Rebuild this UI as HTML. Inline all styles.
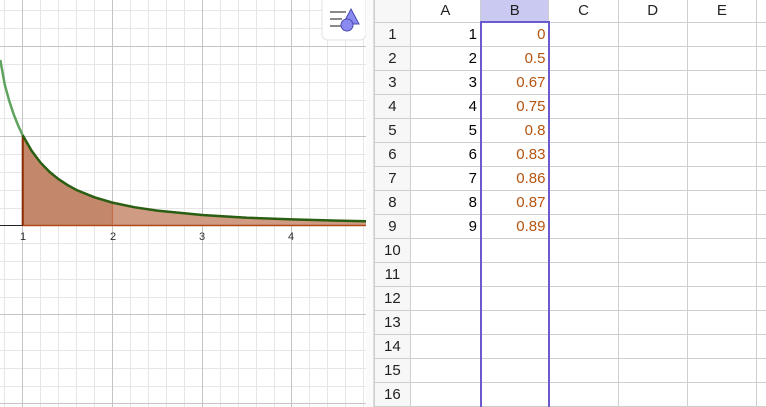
<!DOCTYPE html>
<html><head><meta charset="utf-8"><style>
html,body{margin:0;width:766px;height:407px;overflow:hidden}
body{background:#fff;font-family:"Liberation Sans",Arial,sans-serif;position:relative}
#g{position:absolute;left:0;top:0}
#ss{position:absolute;left:373px;top:0;width:393px;height:407px;overflow:hidden;border-left:1px solid #ddd;background:#fff}
table{border-collapse:collapse;position:absolute;left:0;top:0;font-size:15px;table-layout:fixed}
td{border:1px solid #cfcfcf;height:24px;padding:0 3px;text-align:right;box-sizing:border-box}
td.h{background:#f7f7f7;text-align:center;color:#222}
tr.hd td{background:#fff;text-align:center;height:22px;border-top:none;color:#222}
tr.hd td.b{background:#c9c9f2}
td.v{color:#b5530f}
</style></head><body>
<svg id="g" width="374" height="407" xmlns="http://www.w3.org/2000/svg">
<rect width="374" height="407" fill="#fff"/>
<g stroke="#e6e6e6" stroke-width="1">
<path d="M4.5 0V407M40.5 0V407M58.5 0V407M76.5 0V407M94.5 0V407M130.5 0V407M148.5 0V407M166.5 0V407M184.5 0V407M220.5 0V407M238.5 0V407M256.5 0V407M274.5 0V407M309.5 0V407M327.5 0V407M345.5 0V407M363.5 0V407"/>
<path d="M0 10.5H366M0 28.5H366M0 64.5H366M0 82.5H366M0 100.5H366M0 118.5H366M0 154.5H366M0 172.5H366M0 190.5H366M0 208.5H366M0 243.5H366M0 261.5H366M0 279.5H366M0 297.5H366M0 332.5H366M0 350.5H366M0 368.5H366M0 386.5H366"/>
</g>
<g stroke="#c4c4c4" stroke-width="1">
<path d="M22.5 0V407M112.5 0V407M202.5 0V407M291.5 0V407M0 46.5H366M0 136.5H366M0 314.5H366M0 403.5H366"/>
</g>
<path d="M112.4 225V202.6L134.8 207.3L157.3 210.6L202.1 215L247 217.7L291.8 219.4L336.7 220.6L366 221.2V225Z" fill="#cf9b82"/>
<path d="M22.7 225V135.3L31.7 150.9L40.6 162.7L49.6 171.9L58.6 179.2L67.6 185.1L76.5 190L94.5 197.3L112.4 202.6V225Z" fill="#c3876b"/>
<line x1="0" y1="225.5" x2="366" y2="225.5" stroke="#222" stroke-width="1"/>
<line x1="22.7" y1="225.5" x2="366" y2="225.5" stroke="#b04a1a" stroke-width="1.5"/>
<line x1="22.7" y1="135" x2="22.7" y2="225" stroke="#8b2a00" stroke-width="2"/>
<line x1="112.4" y1="202.6" x2="112.4" y2="225" stroke="#c06a40" stroke-width="1"/>
<polyline points="0.3,60 4.8,84.8 9.2,100.8 13.7,114.3 18.2,125.6 22.7,135.3" fill="none" stroke="#5fa35f" stroke-width="2.5"/>
<polyline points="22.7,135.3 31.7,150.9 40.6,162.7 49.6,171.9 58.6,179.2 67.6,185.1 76.5,190 94.5,197.3 112.4,202.6 134.8,207.3 157.3,210.6 202.1,215 247,217.7 291.8,219.4 336.7,220.6 366,221.2" fill="none" stroke="#2a5e12" stroke-width="2.5"/>
<g font-family="Liberation Sans,Arial,sans-serif" font-size="11" fill="#333" text-anchor="middle">
<text x="23" y="240">1</text><text x="113" y="240">2</text><text x="202" y="240">3</text><text x="291" y="240">4</text>
</g>
<rect x="322" y="-4" width="44" height="44" rx="6" fill="#fff" stroke="#e2e2e2"/>
<g stroke="#8a8a8a" stroke-width="2"><path d="M330 12H346M330 19H342M330 26H342"/></g>
<polygon points="351,9 359,24 343,24" fill="#8b8bef" stroke="#4a4ab0" stroke-width="1"/>
<circle cx="347" cy="25" r="6" fill="#8b8bef" stroke="#4a4ab0" stroke-width="1"/>
<rect x="366" y="0" width="8" height="407" fill="#fbfbfb"/>
</svg>
<div id="ss">
<table>
<colgroup><col style="width:36px"><col style="width:71px"><col style="width:69px"><col style="width:70px"><col style="width:70px"><col style="width:70px"><col style="width:10px"></colgroup>
<tr class="hd"><td class="h" style="background:#f7f7f7"></td><td>A</td><td class="b">B</td><td>C</td><td>D</td><td>E</td><td></td></tr>
<tr><td class="h">1</td><td>1</td><td class="v">0</td><td></td><td></td><td></td><td></td></tr>
<tr><td class="h">2</td><td>2</td><td class="v">0.5</td><td></td><td></td><td></td><td></td></tr>
<tr><td class="h">3</td><td>3</td><td class="v">0.67</td><td></td><td></td><td></td><td></td></tr>
<tr><td class="h">4</td><td>4</td><td class="v">0.75</td><td></td><td></td><td></td><td></td></tr>
<tr><td class="h">5</td><td>5</td><td class="v">0.8</td><td></td><td></td><td></td><td></td></tr>
<tr><td class="h">6</td><td>6</td><td class="v">0.83</td><td></td><td></td><td></td><td></td></tr>
<tr><td class="h">7</td><td>7</td><td class="v">0.86</td><td></td><td></td><td></td><td></td></tr>
<tr><td class="h">8</td><td>8</td><td class="v">0.87</td><td></td><td></td><td></td><td></td></tr>
<tr><td class="h">9</td><td>9</td><td class="v">0.89</td><td></td><td></td><td></td><td></td></tr>
<tr><td class="h">10</td><td></td><td></td><td></td><td></td><td></td><td></td></tr>
<tr><td class="h">11</td><td></td><td></td><td></td><td></td><td></td><td></td></tr>
<tr><td class="h">12</td><td></td><td></td><td></td><td></td><td></td><td></td></tr>
<tr><td class="h">13</td><td></td><td></td><td></td><td></td><td></td><td></td></tr>
<tr><td class="h">14</td><td></td><td></td><td></td><td></td><td></td><td></td></tr>
<tr><td class="h">15</td><td></td><td></td><td></td><td></td><td></td><td></td></tr>
<tr><td class="h">16</td><td></td><td></td><td></td><td></td><td></td><td></td></tr>
</table>
<div style="position:absolute;left:106px;top:21px;width:70px;height:386px;box-sizing:border-box;border:2px solid #6a5acd;border-bottom:none"></div>
</div>
</body></html>
